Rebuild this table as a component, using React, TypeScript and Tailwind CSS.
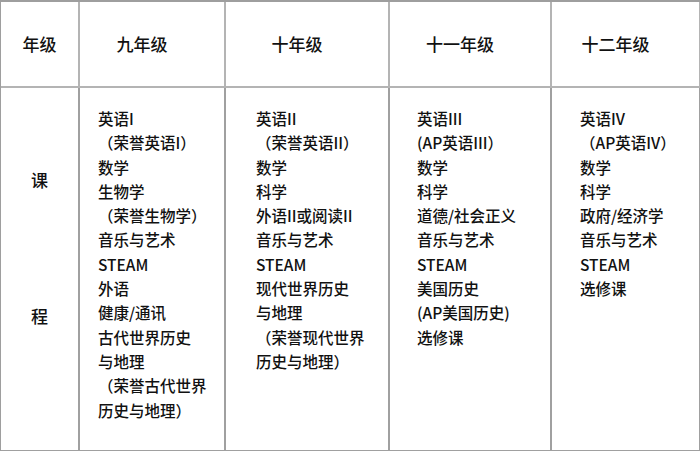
import React from 'react';

const grades = [
    { title: '九年级', pl: 'pl-[18px]', items: ['英语I', '（荣誉英语I）', '数学', '生物学', '（荣誉生物学）', '音乐与艺术', 'STEAM', '外语', '健康/通讯', '古代世界历史', '与地理', '（荣誉古代世界', '历史与地理）'] },
    { title: '十年级', pl: 'pl-[30px]', items: ['英语II', '（荣誉英语II）', '数学', '科学', '外语II或阅读II', '音乐与艺术', 'STEAM', '现代世界历史', '与地理', '（荣誉现代世界', '历史与地理）'] },
    { title: '十一年级', pl: 'pl-[27px]', items: ['英语III', '(AP英语III）', '数学', '科学', '道德/社会正义', '音乐与艺术', 'STEAM', '美国历史', '(AP美国历史)', '选修课'] },
    { title: '十二年级', pl: 'pl-[28px]', items: ['英语IV', '（AP英语IV）', '数学', '科学', '政府/经济学', '音乐与艺术', 'STEAM', '选修课'] },
];

const App: React.FC = () => {
    return (
        <div
            className="w-[700px] h-[451px] bg-white text-[#111] font-medium overflow-hidden"
            style={{ fontFamily: '"Noto Sans CJK SC", "Noto Sans", sans-serif' }}
        >
            <div className="grid grid-cols-[79px_146px_164px_162px_149px] grid-rows-[86px_364px] border-t-2 border-l border-[#9e9e9e]">
                {/* header row */}
                <div className="flex items-center justify-center text-[17px] border-r-2 border-b-2 border-[#b4b4b4]">年级</div>
                {grades.map(g => (
                    <div key={g.title} className="flex items-center justify-center pr-[20px] text-[17px] border-r-2 border-b-2 border-[#b4b4b4]">
                        {g.title}
                    </div>
                ))}

                {/* body row */}
                <div className="flex flex-col items-center pt-[80px] gap-[112px] text-[17px] leading-[24px] border-r-2 border-b-2 border-[#a0a0a0]">
                    <span>课</span>
                    <span>程</span>
                </div>
                {grades.map(g => (
                    <div key={g.title} className={`flex flex-col pt-[18px] text-[15.5px] leading-[24.3px] border-r-2 border-b-2 border-[#a0a0a0] ${g.pl}`}>
                        {g.items.map((item, i) => (
                            <span key={i} className="whitespace-nowrap">{item}</span>
                        ))}
                    </div>
                ))}
            </div>
        </div>
    );
};

export default App;
